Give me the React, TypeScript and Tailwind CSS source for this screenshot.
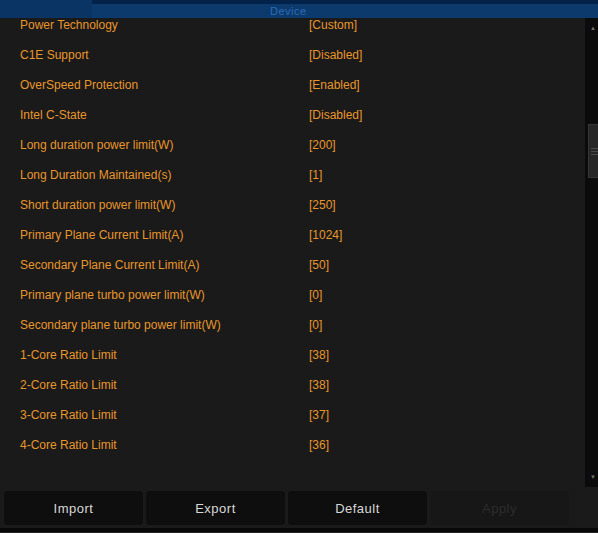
import React from 'react';

const rows: [string, string][] = [
  ['Power Technology', '[Custom]'],
  ['C1E Support', '[Disabled]'],
  ['OverSpeed Protection', '[Enabled]'],
  ['Intel C-State', '[Disabled]'],
  ['Long duration power limit(W)', '[200]'],
  ['Long Duration Maintained(s)', '[1]'],
  ['Short duration power limit(W)', '[250]'],
  ['Primary Plane Current Limit(A)', '[1024]'],
  ['Secondary Plane Current Limit(A)', '[50]'],
  ['Primary plane turbo power limit(W)', '[0]'],
  ['Secondary plane turbo power limit(W)', '[0]'],
  ['1-Core Ratio Limit', '[38]'],
  ['2-Core Ratio Limit', '[38]'],
  ['3-Core Ratio Limit', '[37]'],
  ['4-Core Ratio Limit', '[36]'],
];

function Btn({ label, disabled }: { label: string; disabled?: boolean }) {
  return (
    <button
      className={
        'h-[34px] w-[139px] rounded-[3px] text-[13px] tracking-[0.5px] pt-[2px] ' +
        (disabled ? 'bg-[#171717] text-[#2c2c2c]' : 'bg-[#0e0e0e] text-[#d8d8d8] shadow-[0_0_1px_#2a2a2a]')
      }
    >
      {label}
    </button>
  );
}

export default function App() {
  return (
    <main
      className="w-[598px] h-[533px] overflow-hidden bg-[#1a1a1a] flex flex-col"
      style={{ fontFamily: '"Liberation Sans", Arial, sans-serif' }}
    >
      <div className="h-[18px] flex bg-[#0a3463] relative z-10">
        <div className="w-[92px]" />
        <div className="flex-1 flex flex-col">
          <div className="h-[4px] bg-[#03224a]" />
          <div className="flex-1 bg-[#0c3a6c] flex items-center pl-[178px]">
            <span className="text-[11px] leading-none text-[#2b6cb8] tracking-[0.5px]">Device</span>
          </div>
        </div>
      </div>
      <div className="flex h-[469px]">
        <div className="flex-1 overflow-hidden">
          <div className="-mt-[8px]">
            {rows.map(([k, v]) => (
              <div key={k} className="h-[30px] flex items-center text-[12px] text-[#e8962a]">
                <span className="w-[309px] pl-[20px]">{k}</span>
                <span>{v}</span>
              </div>
            ))}
          </div>
        </div>
        <div className="w-[13px] bg-[#0b0b0b] flex flex-col items-end">
          <div className="h-[20px] w-full flex items-center justify-end pr-[2px]">
            <span className="text-[6px] text-[#707070] leading-none">▲</span>
          </div>
          <div className="mt-[86px] w-[10px] h-[54px] bg-[#262626] border-l border-t border-b border-[#363636] flex flex-col justify-center gap-[2px] pl-[2px]">
            <div className="h-[1px] w-full bg-[#4a4a4a]" />
            <div className="h-[1px] w-full bg-[#4a4a4a]" />
            <div className="h-[1px] w-full bg-[#4a4a4a]" />
          </div>
          <div className="mt-auto h-[20px] w-full flex items-center justify-end pr-[2px]">
            <span className="text-[6px] text-[#707070] leading-none">▼</span>
          </div>
        </div>
      </div>
      <div className="flex gap-[3px] pl-[4px] pt-[4px]">
        <Btn label="Import" />
        <Btn label="Export" />
        <Btn label="Default" />
        <Btn label="Apply" disabled />
      </div>
      <div className="mt-auto h-[5px] bg-[#080808] border-b border-[#222]" />
    </main>
  );
}
